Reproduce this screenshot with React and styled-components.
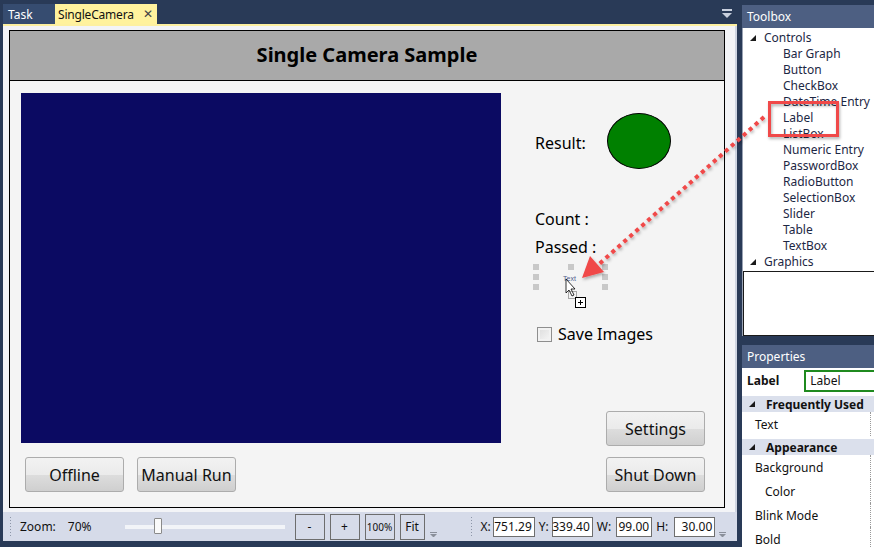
import { styled, createGlobalStyle } from "styled-components";

const GlobalStyle = createGlobalStyle`
  html, body {
    margin: 0;
    padding: 0;
    background: #293a57;
    overflow: hidden;
  }
  body {
    font-family: "Noto Sans", "Open Sans", sans-serif;
    width: 874px;
    height: 547px;
  }
  * { box-sizing: border-box; }
`;

const Page = styled.div`
  position: relative;
  width: 874px;
  height: 547px;
  display: flex;
  gap: 5px;
  overflow: hidden;
`;

// ---- left document area
const DocColumn = styled.div`
  width: 737px;
  flex-shrink: 0;
  padding-left: 3px;
  display: flex;
  flex-direction: column;
`;

const TabStrip = styled.div`
  height: 26px;
  padding-top: 4px;
  display: flex;
  align-items: stretch;
  border-bottom: 2px solid #fdf0a0;
  position: relative;
`;

const Tab = styled.div`
  display: flex;
  align-items: center;
  gap: 9px;
  padding: 0 5px 0 ${(p) => (p.$active ? "3px" : "5px")};
  width: ${(p) => p.$w}px;
  font-size: 12px;
  letter-spacing: ${(p) => (p.$active ? "-0.2px" : "0")};
  color: ${(p) => (p.$active ? "#111" : "#fff")};
  background: ${(p) => (p.$active ? "#fff29d" : "#364c70")};
`;

const TabClose = styled.span`
  font-size: 12px;
  color: #444;
  line-height: 1;
`;

const TabMenu = styled.div`
  position: absolute;
  right: 5px;
  top: 9px;
  width: 10px;
  display: flex;
  flex-direction: column;
  align-items: center;
  gap: 2px;
  &::before {
    content: "";
    width: 10px;
    height: 2px;
    background: #c9d0de;
  }
  &::after {
    content: "";
    border-left: 5px solid transparent;
    border-right: 5px solid transparent;
    border-top: 5px solid #c9d0de;
  }
`;

const Editor = styled.div`
  height: 486px;
  flex-shrink: 0;
  background: #f3f4f7;
  padding: 4px 10px 4px 6px;
  border-right: 2px solid #cfd5e2;
`;

const Surface = styled.div`
  height: 100%;
  border: 1px solid #000;
  background: #f4f4f4;
  display: flex;
  flex-direction: column;
`;

const SurfaceTitle = styled.div`
  height: 50px;
  flex-shrink: 0;
  background: #a9a9a9;
  border-bottom: 1px solid #000;
  display: flex;
  align-items: center;
  justify-content: center;
  font-size: 20px;
  font-weight: 700;
  color: #000;
  padding-bottom: 2px;
`;

const SurfaceBody = styled.div`
  flex: 1;
  display: flex;
  padding: 12px 0 15px 11px;
`;

const LeftPane = styled.div`
  display: flex;
  flex-direction: column;
  gap: 14px;
`;

const VideoBox = styled.div`
  width: 480px;
  height: 350px;
  background: #0b0a62;
`;

const ButtonRow = styled.div`
  display: flex;
  gap: 13px;
  padding-left: 4px;
`;

const WpfButton = styled.div`
  width: 99px;
  height: 35px;
  border: 1px solid #acacac;
  border-radius: 3px;
  background: linear-gradient(#f2f2f2, #ebebeb 50%, #dddddd 51%, #cfcfcf);
  display: flex;
  align-items: center;
  justify-content: center;
  font-size: 16px;
  color: #111;
`;

const RightPane = styled.div`
  margin-left: 34px;
  width: 172px;
  display: flex;
  flex-direction: column;
`;

const ResultRow = styled.div`
  margin-top: 20px;
  height: 56px;
  display: flex;
  align-items: center;
`;

const FieldLabel = styled.div`
  font-size: 16px;
  color: #000;
  width: ${(p) => p.$w || "auto"};
  height: ${(p) => p.$h || "auto"};
  padding-top: ${(p) => p.$pt || 0}px;
  display: flex;
  align-items: center;
`;

const StatusLamp = styled.div`
  width: 64px;
  height: 56px;
  border-radius: 50%;
  background: #008000;
  border: 1px solid #000;
`;

const CountBlock = styled.div`
  margin-top: 36px;
  display: flex;
  flex-direction: column;
`;

const DropGhost = styled.div`
  position: relative;
  margin: 3px 0 0 -2px;
  width: 76px;
  height: 28px;
`;

const Handle = styled.span`
  position: absolute;
  width: 6px;
  height: 6px;
  background: #c8c8c8;
  left: ${(p) => p.$x}px;
  top: ${(p) => p.$y}px;
`;

const GhostText = styled.span`
  position: absolute;
  left: 30px;
  top: 11px;
  font-size: 7px;
  color: #51608c;
  font-family: "Liberation Sans", sans-serif;
`;

const CheckRow = styled.div`
  margin-top: 31px;
  display: flex;
  align-items: center;
  gap: 6px;
  font-size: 16px;
`;

const CheckBox = styled.div`
  width: 15px;
  height: 15px;
  margin-left: 2px;
  border: 1px solid #8e8e8e;
  background: linear-gradient(135deg, #dcdcdc, #f7f7f7);
  box-shadow: inset 0 0 0 2px #f2f2f2;
`;

const SideButtons = styled.div`
  margin-top: auto;
  padding-left: 71px;
  display: flex;
  flex-direction: column;
  gap: 11px;
`;

// ---- status bar
const StatusBar = styled.div`
  height: 29px;
  flex-shrink: 0;
  background: #d6dbe9;
  display: flex;
  align-items: center;
  font-size: 12px;
  color: #111;
  position: relative;
`;

const Gripper = styled.div`
  width: 3px;
  height: 22px;
  margin: 0 ${(p) => p.$mr}px 0 ${(p) => p.$ml}px;
  background-image: radial-gradient(#8d96a8 0.7px, transparent 0.8px);
  background-size: 3px 3px;
`;

const BarText = styled.span`
  margin-right: ${(p) => p.$mr || 0}px;
`;

const Track = styled.div`
  position: relative;
  width: 160px;
  height: 4px;
  background: #f2f4f8;
  margin: 0 10px 0 0;
`;

const Thumb = styled.div`
  position: absolute;
  left: 29px;
  top: -7px;
  width: 8px;
  height: 16px;
  background: #fafafa;
  border: 1px solid #8a8a8a;
  border-radius: 1px;
`;

const ZoomButton = styled.div`
  width: ${(p) => p.$w || 30}px;
  height: 26px;
  margin-right: 5px;
  border: 1px solid #6d6d6d;
  display: flex;
  align-items: center;
  justify-content: center;
  font-size: ${(p) => p.$fs || 12}px;
`;

const OverflowArrow = styled.span`
  align-self: flex-end;
  margin: 0 ${(p) => p.$mr || 0}px 4px 0;
  width: 7px;
  height: 5px;
  display: flex;
  flex-direction: column;
  gap: 1px;
  &::before {
    content: "";
    height: 1px;
    background: #8a8f9a;
  }
  &::after {
    content: "";
    border-left: 3.5px solid transparent;
    border-right: 3.5px solid transparent;
    border-top: 3px solid #8a8f9a;
  }
`;

const NumField = styled.div`
  width: ${(p) => p.$w}px;
  height: 20px;
  margin-right: 4px;
  background: #fff;
  border: 1px solid #6e6e6e;
  display: flex;
  align-items: center;
  justify-content: flex-end;
  padding-right: 2px;
  font-size: 12px;
`;

// ---- right side panels
const SideColumn = styled.div`
  width: 140px;
  flex-shrink: 0;
  display: flex;
  flex-direction: column;
  padding-top: 5px;
`;

const PanelHeader = styled.div`
  height: 23px;
  flex-shrink: 0;
  background: #4d5f82;
  color: #fff;
  font-size: 12px;
  display: flex;
  align-items: center;
  padding-left: 5px;
`;

const ToolboxBody = styled.div`
  height: 308px;
  flex-shrink: 0;
  background: #fff;
  display: flex;
  flex-direction: column;
  border-left: 1px solid #9aa3b4;
`;

const TreeList = styled.div`
  padding-top: 2px;
  display: flex;
  flex-direction: column;
  font-size: 12px;
  color: #1c2744;
`;

const TreeItem = styled.div`
  height: 16px;
  line-height: 16px;
  padding-left: ${(p) => (p.$group ? 7 : 40)}px;
  display: flex;
  align-items: center;
  gap: 8px;
  white-space: nowrap;
`;

const Expander = styled.span`
  width: 0;
  height: 0;
  border-left: 6px solid transparent;
  border-bottom: 6px solid #1a1a1a;
`;

const ToolPreview = styled.div`
  flex: 1;
  margin-top: 1px;
  border: 1px solid #1a1a1a;
  border-right: none;
`;

const PropsPanel = styled.div`
  margin-top: 9px;
  flex-shrink: 0;
  display: flex;
  flex-direction: column;
`;

const PropsBody = styled.div`
  background: #fff;
  font-size: 12px;
  color: #111;
`;

const NameRow = styled.div`
  height: 25px;
  display: flex;
  align-items: center;
  padding-left: 5px;
  font-weight: 700;
  gap: 25px;
`;

const NameInput = styled.div`
  flex: 1;
  height: 22px;
  border: 2px solid #1f8a1f;
  border-right: none;
  display: flex;
  align-items: center;
  padding-left: 4px;
  font-weight: 400;
`;

const Category = styled.div`
  height: 16px;
  margin-top: 3px;
  background: #dbe0ec;
  font-weight: 700;
  display: flex;
  align-items: center;
  gap: 11px;
  padding-left: 7px;
`;

const PropRow = styled.div`
  height: 24px;
  display: flex;
  align-items: center;
  padding-left: ${(p) => (p.$sub ? 23 : 13)}px;
  position: relative;
  &::after {
    content: "";
    position: absolute;
    left: 128px;
    top: 0;
    bottom: 0;
    border-left: 1px dotted #999;
  }
`;

// ---- overlay annotation
const Annotation = styled.svg`
  position: absolute;
  inset: 0;
  pointer-events: none;
`;

const tools = [
  "Bar Graph", "Button", "CheckBox", "DateTime Entry", "Label", "ListBox",
  "Numeric Entry", "PasswordBox", "RadioButton", "SelectionBox", "Slider",
  "Table", "TextBox",
];

function App() {
  return (
    <Page>
      <GlobalStyle />
      <DocColumn>
        <TabStrip>
          <Tab $w={52}>Task</Tab>
          <Tab $w={102} $active>SingleCamera<TabClose>✕</TabClose></Tab>
          <TabMenu />
        </TabStrip>
        <Editor>
          <Surface>
            <SurfaceTitle>Single Camera Sample</SurfaceTitle>
            <SurfaceBody>
              <LeftPane>
                <VideoBox />
                <ButtonRow>
                  <WpfButton>Offline</WpfButton>
                  <WpfButton>Manual Run</WpfButton>
                </ButtonRow>
              </LeftPane>
              <RightPane>
                <ResultRow>
                  <FieldLabel $w="72px" $pt={4}>Result:</FieldLabel>
                  <StatusLamp />
                </ResultRow>
                <CountBlock>
                  <FieldLabel $h="28px">Count :</FieldLabel>
                  <FieldLabel $h="28px">Passed :</FieldLabel>
                </CountBlock>
                <DropGhost>
                  <Handle $x={0} $y={0} />
                  <Handle $x={0} $y={10} />
                  <Handle $x={0} $y={20} />
                  <Handle $x={35} $y={0} />
                  <Handle $x={69} $y={0} />
                  <Handle $x={69} $y={10} />
                  <Handle $x={69} $y={20} />
                  <GhostText>Text</GhostText>
                </DropGhost>
                <CheckRow>
                  <CheckBox />
                  Save Images
                </CheckRow>
                <SideButtons>
                  <WpfButton>Settings</WpfButton>
                  <WpfButton>Shut Down</WpfButton>
                </SideButtons>
              </RightPane>
            </SurfaceBody>
          </Surface>
        </Editor>
        <StatusBar>
          <Gripper $ml={6} $mr={8} />
          <BarText $mr={12}>Zoom:</BarText>
          <BarText $mr={33}>70%</BarText>
          <Track><Thumb /></Track>
          <ZoomButton>-</ZoomButton>
          <ZoomButton>+</ZoomButton>
          <ZoomButton $fs={10}>100%</ZoomButton>
          <ZoomButton $w={25}>Fit</ZoomButton>
          <OverflowArrow $mr={33} />
          <Gripper $ml={0} $mr={8} />
          <BarText $mr={2}>X:</BarText>
          <NumField $w={42}>751.29</NumField>
          <BarText $mr={3}>Y:</BarText>
          <NumField $w={41}>339.40</NumField>
          <BarText $mr={5}>W:</BarText>
          <NumField $w={36}>99.00</NumField>
          <BarText $mr={6}>H:</BarText>
          <NumField $w={41}>30.00</NumField>
          <OverflowArrow $mr={6} />
        </StatusBar>
      </DocColumn>

      <SideColumn>
        <PanelHeader>Toolbox</PanelHeader>
        <ToolboxBody>
          <TreeList>
            <TreeItem $group><Expander />Controls</TreeItem>
            {tools.map((t) => (
              <TreeItem key={t}>{t}</TreeItem>
            ))}
            <TreeItem $group><Expander />Graphics</TreeItem>
          </TreeList>
          <ToolPreview />
        </ToolboxBody>
        <PropsPanel>
          <PanelHeader>Properties</PanelHeader>
          <PropsBody>
            <NameRow>Label<NameInput>Label</NameInput></NameRow>
            <Category><Expander />Frequently Used</Category>
            <PropRow>Text</PropRow>
            <Category><Expander />Appearance</Category>
            <PropRow>Background</PropRow>
            <PropRow $sub>Color</PropRow>
            <PropRow>Blink Mode</PropRow>
            <PropRow>Bold</PropRow>
          </PropsBody>
        </PropsPanel>
      </SideColumn>

      <Annotation width="874" height="547" viewBox="0 0 874 547">
        <defs>
          <filter id="sh" x="-20%" y="-20%" width="140%" height="140%">
            <feDropShadow dx="1" dy="2" stdDeviation="1.5" floodColor="#000" floodOpacity="0.3" />
          </filter>
        </defs>
        <g filter="url(#sh)">
          <rect x="769.5" y="102.5" width="68" height="33" fill="none" stroke="#f04848" strokeWidth="3" />
          <line x1="764" y1="117" x2="598" y2="265" stroke="#f04848" strokeWidth="4" strokeDasharray="4 4" />
          <polygon points="582,278 590,256 604,272" fill="#f04848" />
        </g>
        <g>
          <path d="M566 279 L566 293 L569 290 L572 296 L574 295 L571 289 L575 289 Z" fill="#fff" stroke="#000" strokeWidth="0.8" />
          <rect x="568.5" y="291.5" width="8" height="7" fill="none" stroke="#333" strokeWidth="0.8" strokeDasharray="1 1" />
          <rect x="575.5" y="297.5" width="10" height="10" fill="#fff" stroke="#000" strokeWidth="1" />
          <path d="M578 302.5 H583 M580.5 300 V305" stroke="#000" strokeWidth="1" />
        </g>
      </Annotation>
    </Page>
  );
}

export default App;
